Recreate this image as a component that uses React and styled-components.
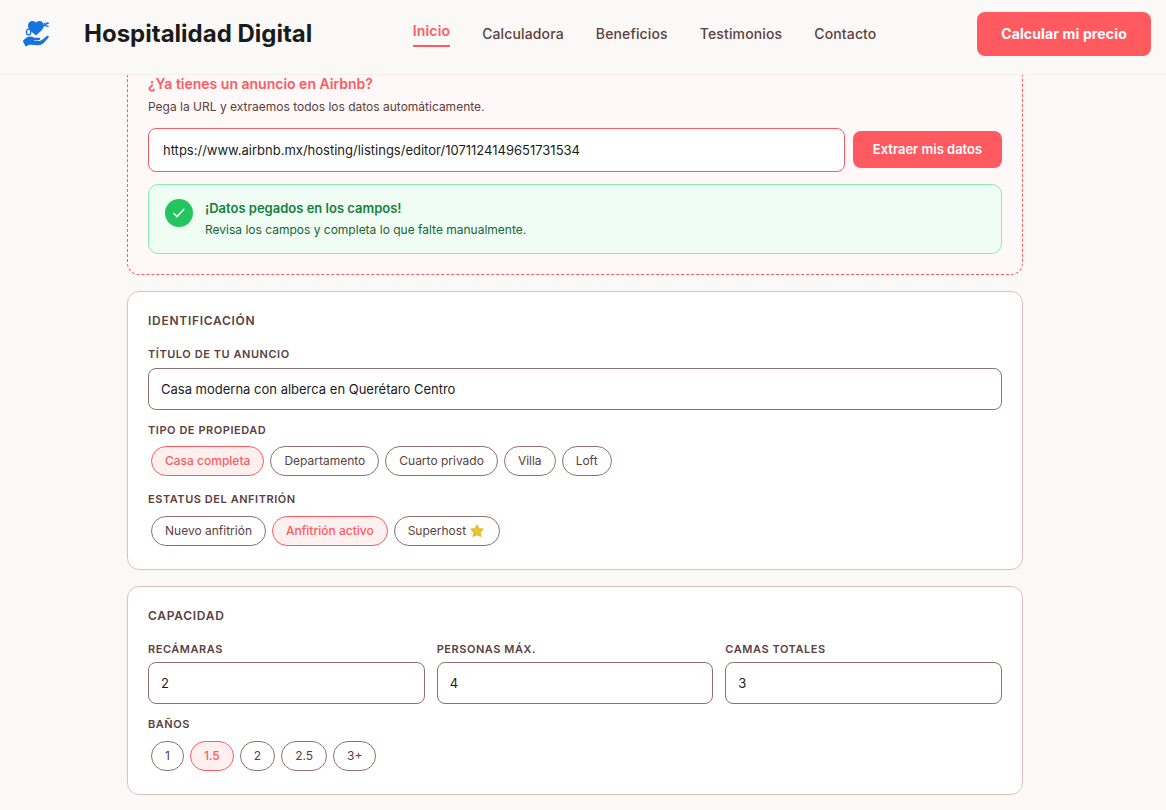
import React, { useState } from 'react';
import styled, { createGlobalStyle } from 'styled-components';

const PROPERTY_TYPES = ['Casa completa', 'Departamento', 'Cuarto privado', 'Villa', 'Loft'];
const HOST_STATUS = ['Nuevo anfitrión', 'Anfitrión activo', 'Superhost'];
const BATHROOMS = ['1', '1.5', '2', '2.5', '3+'];
const NAV = ['Inicio', 'Calculadora', 'Beneficios', 'Testimonios', 'Contacto'];

const LogoIcon = () => (
  <svg width="28" height="28" viewBox="0 0 28 28" fill="#1573e0">
    <path d="M14 15.6 C11.6 13 6 10.4 6 5.8 C6 2.8 8.2 1 10.4 1 C12.2 1 13.4 1.8 14 2.8 C14.6 1.8 15.8 1 17.6 1 C19.8 1 21.6 2.8 21.6 5.8 C21.6 10 16.4 12.8 14 15.6 Z" />
    <path d="M20.4 6.6 L25.6 2.6 M22 3 L22.8 5.6 L26.6 6.4 M23.8 4.2 L26.8 3.2" fill="none" stroke="#1573e0" strokeWidth="1.4" />
    <ellipse cx="6.6" cy="12" rx="2.2" ry="2.9" fill="#fbf9f8" stroke="#1573e0" strokeWidth="1.3" />
    <path d="M0.8 21 C3.2 18.4 5.6 16.2 8.4 16.4 C10.6 16.6 11.8 17.8 13.8 17.8 L17 17.8 C18.6 17.8 18.6 20 17 20.2 L12 20.4 L12 21 L17.8 21 C20.6 20.2 22.8 17.6 25 16 C26.6 15.2 27.4 16.4 26.4 17.6 C23.8 20.8 21.4 24.4 18 25 C14 25.8 10 24.4 6.6 25 L3.6 26.6 Z" />
  </svg>
);

const CheckIcon = () => (
  <svg width="14" height="14" viewBox="0 0 14 14" fill="none" stroke="#fff" strokeWidth="1.6">
    <path d="M1.6 7.2 L5 10.6 L12.2 3" />
  </svg>
);

const StarIcon = () => (
  <svg width="14" height="14" viewBox="0 0 14 14">
    <path
      d="M7 1.2 L8.8 4.7 L12.8 5.3 L9.9 8.2 L10.8 12.2 L7 10.6 L3.2 12.2 L4.1 8.2 L1.2 5.3 L5.2 4.7 Z"
      fill="#ebc334"
      stroke="#e6bb30"
      strokeWidth="1.4"
      strokeLinejoin="round"
    />
  </svg>
);

const ChipGroup = ({ options, value, onChange }) => (
  <Chips>
    {options.map((option) => (
      <Chip key={option} type="button" $active={option === value} onClick={() => onChange(option)}>
        {option}
        {option === 'Superhost' && <Star><StarIcon /></Star>}
      </Chip>
    ))}
  </Chips>
);

const App = () => {
  const [type, setType] = useState('Casa completa');
  const [status, setStatus] = useState('Anfitrión activo');
  const [baths, setBaths] = useState('1.5');

  return (
    <>
      <GlobalStyle />
      <Header>
        <Brand>
          <LogoIcon />
          <BrandName>Hospitalidad Digital</BrandName>
        </Brand>
        <Nav>
          {NAV.map((item) => (
            <NavLink key={item} $active={item === 'Inicio'}>{item}</NavLink>
          ))}
        </Nav>
        <HeaderButton>Calcular mi precio</HeaderButton>
      </Header>

      <Main>
        <ImportPanel>
          <ImportTitle>¿Ya tienes un anuncio en Airbnb?</ImportTitle>
          <ImportText>Pega la URL y extraemos todos los datos automáticamente.</ImportText>
          <UrlRow>
            <UrlInput defaultValue="https://www.airbnb.mx/hosting/listings/editor/1071124149651731534" />
            <ExtractButton>Extraer mis datos</ExtractButton>
          </UrlRow>
          <Alert>
            <AlertIcon><CheckIcon /></AlertIcon>
            <div>
              <AlertTitle>¡Datos pegados en los campos!</AlertTitle>
              <AlertText>Revisa los campos y completa lo que falte manualmente.</AlertText>
            </div>
          </Alert>
        </ImportPanel>

        <Card>
          <CardTitle>Identificación</CardTitle>
          <Field>
            <Label $gap={6}>Título de tu anuncio</Label>
            <Input defaultValue="Casa moderna con alberca en Querétaro Centro" />
          </Field>
          <Field>
            <Label $gap={5}>Tipo de propiedad</Label>
            <ChipGroup options={PROPERTY_TYPES} value={type} onChange={setType} />
          </Field>
          <Field>
            <Label $gap={6}>Estatus del anfitrión</Label>
            <ChipGroup options={HOST_STATUS} value={status} onChange={setStatus} />
          </Field>
        </Card>

        <Card>
          <CardTitle>Capacidad</CardTitle>
          <Columns>
            <Field>
              <Label $gap={5}>Recámaras</Label>
              <Input defaultValue="2" />
            </Field>
            <Field>
              <Label $gap={5}>Personas máx.</Label>
              <Input defaultValue="4" />
            </Field>
            <Field>
              <Label $gap={5}>Camas totales</Label>
              <Input defaultValue="3" />
            </Field>
          </Columns>
          <Field>
            <Label $gap={6}>Baños</Label>
            <ChipGroup options={BATHROOMS} value={baths} onChange={setBaths} />
          </Field>
        </Card>
      </Main>
    </>
  );
};

// Styled components
const GlobalStyle = createGlobalStyle`
  * {
    box-sizing: border-box;
  }

  html {
    overflow: hidden;
  }

  body {
    margin: 0;
    background: #faf9f7;
    color: #1a1c1c;
    font-family: Inter, "Liberation Sans", sans-serif;
  }

  button, input {
    font-family: inherit;
  }
`;

const Header = styled.header`
  position: fixed;
  top: 0;
  left: 0;
  right: 0;
  z-index: 10;
  display: flex;
  align-items: flex-start;
  justify-content: space-between;
  height: 75px;
  padding: 12px 15px 0 22px;
  background: #fbf9f8;
  border-bottom: 1px solid #f2f0ef;
`;

const Brand = styled.div`
  display: flex;
  align-items: center;
  gap: 34px;
  height: 44px;
`;

const BrandName = styled.span`
  font-size: 24px;
  font-weight: 700;
  line-height: 32px;
`;

const Nav = styled.nav`
  display: flex;
  align-items: center;
  gap: 32px;
  height: 44px;
`;

const NavLink = styled.a`
  padding-bottom: ${({ $active }) => ($active ? '4px' : '0')};
  border-bottom: ${({ $active }) => ($active ? '2px solid #ff5a5f' : 'none')};
  color: ${({ $active }) => ($active ? '#ff5a5f' : '#5a403f')};
  font-size: 14px;
  font-weight: ${({ $active }) => ($active ? 600 : 500)};
  line-height: 20px;
  letter-spacing: 0.14px;
  cursor: pointer;
`;

const HeaderButton = styled.button`
  width: 174px;
  height: 44px;
  padding: 0 0 1px;
  border: none;
  border-radius: 8px;
  background: #ff5a5f;
  color: #fff;
  font-size: 14px;
  font-weight: 700;
  letter-spacing: 0.14px;
`;

const Main = styled.main`
  display: flex;
  flex-direction: column;
  gap: 16px;
  width: 896px;
  margin: 0 0 0 127px;
  padding-top: 53px;
`;

const ImportPanel = styled.section`
  padding: 20px;
  border: 1px dashed #ff5a5f;
  border-radius: 12px;
  background: #fff8f8;
`;

const ImportTitle = styled.h3`
  margin: 0 0 5px;
  color: #ff5a5f;
  font-size: 14px;
  font-weight: 600;
  line-height: 19px;
`;

const ImportText = styled.p`
  margin: 0 0 12px;
  color: #5a403f;
  font-size: 12px;
  line-height: 18px;
`;

const UrlRow = styled.div`
  display: flex;
  align-items: flex-start;
  gap: 8px;
  margin-bottom: 12px;
`;

const UrlInput = styled.input`
  flex: 1;
  height: 44px;
  padding: 0 14px;
  border: 1px solid #ff5a5f;
  border-radius: 8px;
  background: #fff;
  color: #1a1c1c;
  font-size: 13px;
  outline: none;
`;

const ExtractButton = styled.button`
  width: 149px;
  height: 37px;
  margin-top: 3px;
  padding: 0 0 1px;
  border: none;
  border-radius: 8px;
  background: #ff5a5f;
  color: #fff;
  font-size: 13px;
  font-weight: 600;
`;

const Alert = styled.div`
  display: flex;
  align-items: flex-start;
  gap: 12px;
  height: 70px;
  padding: 14px 16px;
  border: 1px solid #86efac;
  border-radius: 10px;
  background: #f0fdf4;
`;

const AlertIcon = styled.div`
  display: flex;
  align-items: center;
  justify-content: center;
  width: 28px;
  height: 28px;
  border-radius: 50%;
  background: #22c55e;
`;

const AlertTitle = styled.p`
  margin: 0 0 4px;
  color: #15803d;
  font-size: 13px;
  font-weight: 600;
  line-height: 18px;
`;

const AlertText = styled.p`
  margin: 0;
  color: #166534;
  font-size: 12px;
  line-height: 18px;
`;

const Card = styled.section`
  display: flex;
  flex-direction: column;
  gap: 12px;
  padding: 20px;
  border: 1px solid #e2bebc;
  border-radius: 12px;
  background: #fff;
`;

const CardTitle = styled.h4`
  margin: 0 0 4px;
  color: #5a403f;
  font-size: 12px;
  font-weight: 600;
  line-height: 18px;
  letter-spacing: 0.72px;
  text-transform: uppercase;
`;

const Field = styled.div`
  min-width: 0;
`;

const Label = styled.label`
  display: block;
  margin-bottom: ${({ $gap }) => $gap}px;
  color: #5a403f;
  font-size: 11px;
  font-weight: 600;
  line-height: 16px;
  letter-spacing: 0.55px;
  text-transform: uppercase;
`;

const Input = styled.input`
  display: block;
  width: 100%;
  height: 42px;
  padding: 0 12px;
  border: 1px solid #8e706f;
  border-radius: 8px;
  background: #fff;
  color: #1a1c1c;
  font-size: 13px;
  outline: none;
`;

const Columns = styled.div`
  display: grid;
  grid-template-columns: repeat(3, 1fr);
  gap: 12px;
`;

const Chips = styled.div`
  display: flex;
  gap: 6px;
  padding: 3px;
`;

const Chip = styled.button`
  display: flex;
  align-items: center;
  height: 30px;
  padding: 0 13px 1px;
  border: 1px solid ${({ $active }) => ($active ? '#ff5a5f' : '#8e706f')};
  border-radius: 15px;
  background: ${({ $active }) => ($active ? '#fff0f0' : '#fff')};
  color: ${({ $active }) => ($active ? '#ff5a5f' : '#5a403f')};
  font-size: 12px;
  font-weight: ${({ $active }) => ($active ? 500 : 400)};
  cursor: pointer;
`;

const Star = styled.span`
  display: flex;
  margin: 1px 2px 0 4px;
`;

export default App;
